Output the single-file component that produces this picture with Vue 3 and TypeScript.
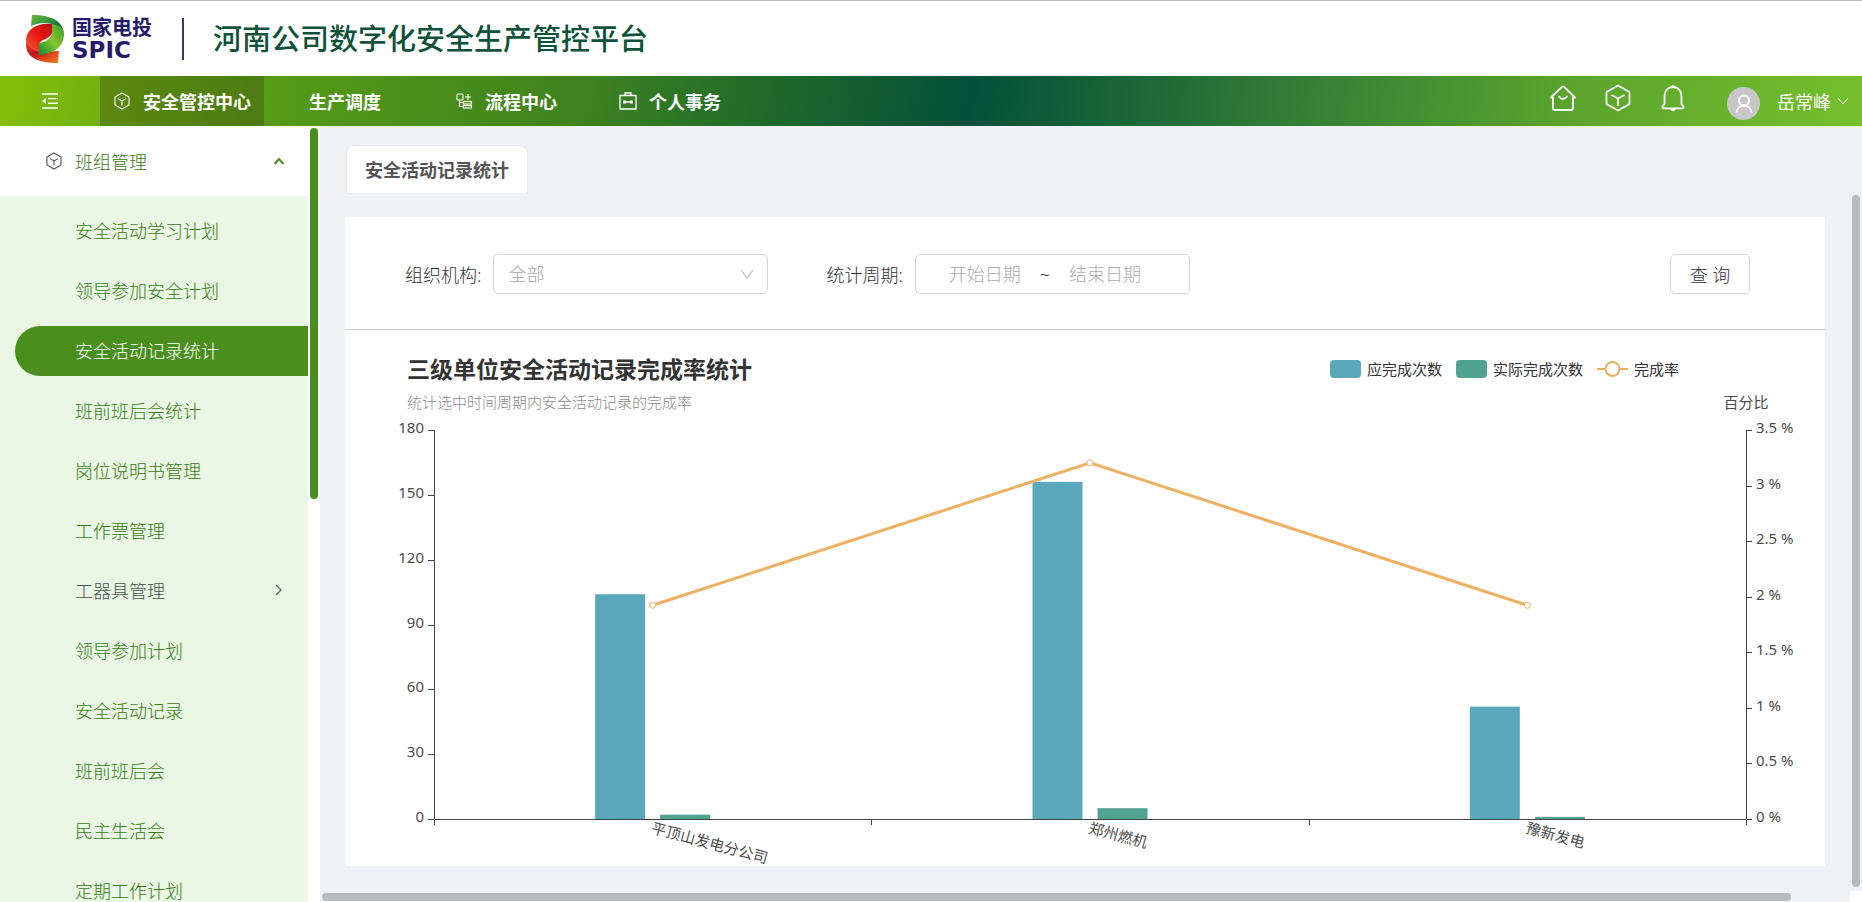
<script setup lang="ts">
import { computed, onBeforeUnmount, onMounted, ref } from 'vue'

interface MenuItem {
  label: string
  active?: boolean
  group?: boolean
}

const menu: MenuItem[] = [
  { label: '安全活动学习计划' },
  { label: '领导参加安全计划' },
  { label: '安全活动记录统计', active: true },
  { label: '班前班后会统计' },
  { label: '岗位说明书管理' },
  { label: '工作票管理' },
  { label: '工器具管理', group: true },
  { label: '领导参加计划' },
  { label: '安全活动记录' },
  { label: '班前班后会' },
  { label: '民主生活会' },
  { label: '定期工作计划' },
]

interface Unit {
  name: string
  planned: number
  done: number
}

const units: Unit[] = [
  { name: '平顶山发电分公司', planned: 104, done: 2 },
  { name: '郑州燃机', planned: 156, done: 5 },
  { name: '豫新发电', planned: 52, done: 1 },
]

const plot = ref<HTMLElement | null>(null)
const width = ref(1480)
const height = 450
const top = 14
const bottom = 403
const left = 89
const barWidth = 50
const barGap = 15
let observer: ResizeObserver | undefined

onMounted(() => {
  if (!plot.value) return
  width.value = plot.value.clientWidth
  observer = new ResizeObserver(() => {
    if (plot.value) width.value = plot.value.clientWidth
  })
  observer.observe(plot.value)
})
onBeforeUnmount(() => observer?.disconnect())

const right = computed(() => width.value - 79)
const band = computed(() => (right.value - left) / units.length)
const countY = (v: number): number => bottom - (v / 180) * (bottom - top)
const rateY = (v: number): number => bottom - (v / 3.5) * (bottom - top)
const countTicks = [0, 30, 60, 90, 120, 150, 180]
const rateTicks = [0, 0.5, 1, 1.5, 2, 2.5, 3, 3.5]
const groups = computed(() =>
  units.map((u, i) => ({
    ...u,
    x: left + band.value * (i + 0.5),
    rate: rateY((u.done / u.planned) * 100),
  })),
)
const linePoints = computed(() => groups.value.map((g) => `${g.x},${g.rate}`).join(' '))
const edges = computed(() => [0, 1, 2, 3].map((i) => Math.round(left + band.value * i)))
</script>

<template>
  <div class="app">
    <header class="brand">
      <svg class="logo" viewBox="0 0 40 48" aria-hidden="true">
        <defs>
          <linearGradient id="lgTop" x1="0" y1="0" x2="1" y2="1">
            <stop offset="0" stop-color="#6fb53c" />
            <stop offset="0.45" stop-color="#2b9340" />
            <stop offset="0.75" stop-color="#0a5a36" />
            <stop offset="1" stop-color="#1b8a3c" />
          </linearGradient>
          <linearGradient id="lgSide" x1="1" y1="0" x2="0" y2="1">
            <stop offset="0" stop-color="#3a9c35" />
            <stop offset="0.5" stop-color="#86c62c" />
            <stop offset="1" stop-color="#0e8a3b" />
          </linearGradient>
          <linearGradient id="lgRed" x1="1" y1="0" x2="0" y2="1">
            <stop offset="0" stop-color="#b80d16" />
            <stop offset="0.45" stop-color="#e8150f" />
            <stop offset="1" stop-color="#f0603a" />
          </linearGradient>
          <linearGradient id="lgBase" x1="0" y1="0" x2="1" y2="1">
            <stop offset="0" stop-color="#e8452c" />
            <stop offset="0.45" stop-color="#c5121c" />
            <stop offset="1" stop-color="#f5861c" />
          </linearGradient>
        </defs>
        <path d="M0 24C2 34 10 37 33 36L32 48C14 48 0 43 0 30Z" fill="url(#lgBase)" />
        <path d="M6 0C24 0 38 5 38 21L26 19V9C19 7 12 8 5 11Z" fill="url(#lgTop)" />
        <path d="M37 14C41 29 31 38 13 40V28C21 27 25 23 26 18L26 9C31 10 35 11 37 14Z" fill="url(#lgSide)" />
        <path d="M26 9V18C24 24 15 24 13 29V37C6 35 0 30 0 24C1 14 12 7 26 9Z" fill="url(#lgRed)" />
      </svg>
      <div class="wordmark">
        <span class="wordmark-cn">国家电投</span>
        <span class="wordmark-en">SPIC</span>
      </div>
      <span class="brand-rule"></span>
      <h1>河南公司数字化安全生产管控平台</h1>
    </header>

    <nav class="topnav">
      <button class="collapse" type="button" aria-label="收起菜单">
        <svg width="18" height="16" viewBox="0 0 18 16" fill="none" stroke="#fff" stroke-width="1.4">
          <path d="M1 1H17M7 5.6H17M7 10.2H17M1 15H17" />
          <path d="M5 5V11L1 8Z" fill="#fff" stroke="none" />
        </svg>
      </button>
      <a class="nav-item current" href="#">
        <svg width="18" height="18" viewBox="0 0 18 18" fill="none" stroke="#fff" stroke-width="1.1">
          <path d="M9 1L16 5V13L9 17L2 13V5ZM5 6.6L9 9L13 6.6M9 9V13.5" />
        </svg>
        安全管控中心
      </a>
      <a class="nav-item plain" href="#">生产调度</a>
      <a class="nav-item" href="#">
        <svg width="18" height="18" viewBox="0 0 18 18" fill="none" stroke="#fff" stroke-width="1.1">
          <rect x="2" y="2" width="6" height="6" rx="1" />
          <path d="M13 2V8M10 5H16M4.5 8V14.5H8M4.5 10.5H8" />
          <rect x="8.5" y="9.5" width="8" height="2.5" />
          <rect x="8.5" y="13.5" width="8" height="2.5" />
        </svg>
        流程中心
      </a>
      <a class="nav-item" href="#">
        <svg width="18" height="18" viewBox="0 0 18 18" fill="none" stroke="#fff" stroke-width="1.3">
          <path d="M1 3.5H17V17H1ZM6 3.5V1H12V3.5M4 10H14" />
          <path d="M4 8.5H7V11.5H4ZM11 8.5H14V11.5H11Z" fill="#fff" stroke="none" />
        </svg>
        个人事务
      </a>
      <div class="tools">
        <button type="button" aria-label="首页">
          <svg width="28" height="28" viewBox="0 0 28 28" fill="none" stroke="#fff" stroke-width="1.8" stroke-linejoin="round" stroke-linecap="round">
            <path d="M4 13.5H2L13 2.8Q14 2 15 2.8L26 13.5H24V24Q24 26 22 26H6Q4 26 4 24ZM10 12.5Q14 17.5 18 12.5" />
          </svg>
        </button>
        <button type="button" aria-label="应用">
          <svg width="28" height="28" viewBox="0 0 28 28" fill="none" stroke="#fff" stroke-width="1.7" stroke-linejoin="round">
            <path d="M14 1.5L25.5 8V20L14 26.5L2.5 20V8ZM7.5 11L14 14.5L20.5 11M14 14.5V22" />
          </svg>
        </button>
        <button type="button" aria-label="通知">
          <svg width="28" height="28" viewBox="0 0 28 28" fill="none" stroke="#fff" stroke-width="1.8" stroke-linejoin="round">
            <path d="M5.5 20V12.5C5.5 6.5 9 3 14 3S22.5 6.5 22.5 12.5V20L24.7 22.8Q24.7 24.3 23.5 24.3H4.5Q3.3 24.3 3.3 22.8ZM13 3Q14 1 15 3M11.5 24.3Q14 28.3 16.5 24.3" />
          </svg>
        </button>
        <svg class="avatar" width="33" height="33" viewBox="0 0 33 33" fill="none" stroke="#fff" stroke-width="2" aria-hidden="true">
          <circle cx="16.5" cy="16.5" r="16.5" fill="#c7c7c7" stroke="none" />
          <circle cx="17" cy="13.5" r="5" />
          <path d="M9.5 25.5C10 16.5 24 16.5 24.5 25.5" />
        </svg>
        <button class="user" type="button">
          岳常峰
          <svg width="12" height="8" viewBox="0 0 12 8" fill="none" stroke="#fff"><path d="M1 1L6 7L11 1" /></svg>
        </button>
      </div>
    </nav>

    <div class="body">
      <aside class="sidebar">
        <div class="menu">
          <button class="menu-head" type="button">
            <svg width="18" height="18" viewBox="0 0 18 18" fill="none" stroke="#555" stroke-width="1.1">
              <path d="M9 1L16 5V13L9 17L2 13V5ZM5 6.6L9 9L13 6.6M9 9V13.5" />
            </svg>
            <span>班组管理</span>
            <svg class="chev" width="12" height="8" viewBox="0 0 12 8" fill="none" stroke="#4b8f1e" stroke-width="2"><path d="M1.5 7L6 2L10.5 7" /></svg>
          </button>
          <ul>
            <li v-for="m in menu" :key="m.label">
              <a href="#" :class="{ active: m.active, group: m.group }">
                {{ m.label }}
                <svg v-if="m.group" class="chev" width="12" height="12" viewBox="0 0 12 12" fill="none" stroke="#666" stroke-width="1.4"><path d="M3 1L8 6L3 11" /></svg>
              </a>
            </li>
          </ul>
        </div>
        <div class="side-track"><span></span></div>
      </aside>

      <main>
        <div class="tabs"><a class="tab" href="#">安全活动记录统计</a></div>
        <div class="view">
          <div class="scroll-area">
            <section class="card">
              <form class="filters" @submit.prevent>
                <label for="org">组织机构:</label>
                <div class="select-wrap">
                  <select id="org"><option>全部</option></select>
                  <svg width="14" height="10" viewBox="0 0 14 10" fill="none" stroke="#bbb" stroke-width="1.2"><path d="M1 1L7 9L13 1" /></svg>
                </div>
                <label class="second" for="start">统计周期:</label>
                <div class="range">
                  <input id="start" type="text" placeholder="开始日期" />
                  <span>~</span>
                  <input type="text" placeholder="结束日期" aria-label="结束日期" />
                </div>
                <button class="query" type="submit">查 询</button>
              </form>

              <div class="chart-head">
                <div>
                  <h2>三级单位安全活动记录完成率统计</h2>
                  <p>统计选中时间周期内安全活动记录的完成率</p>
                </div>
                <ul class="legend">
                  <li><i class="planned"></i>应完成次数</li>
                  <li><i class="done"></i>实际完成次数</li>
                  <li>
                    <svg width="31" height="18" viewBox="0 0 31 18" fill="#fff" stroke="#f0b062" stroke-width="2"><path d="M0 9H31" /><circle cx="15.5" cy="9" r="7" /></svg>
                    完成率
                  </li>
                </ul>
              </div>

              <div ref="plot" class="plot">
                <svg class="chart" :width="width" :height="height" role="img" aria-label="三级单位安全活动记录完成率统计">
                  <g v-for="g in groups" :key="g.name">
                    <rect class="planned" :x="g.x - barWidth - barGap / 2" :y="countY(g.planned)" :width="barWidth" :height="bottom - countY(g.planned)" />
                    <rect class="done" :x="g.x + barGap / 2" :y="countY(g.done)" :width="barWidth" :height="bottom - countY(g.done)" />
                  </g>
                  <g class="axis">
                    <path :d="`M${left} ${top}V${bottom + 6}M${right} ${top}V${bottom + 6}M${left} ${bottom}H${right}`" />
                    <path v-for="e in edges" :key="e" :d="`M${e} ${bottom}v6`" />
                    <path v-for="t in countTicks" :key="t" :d="`M${left} ${Math.round(countY(t))}h-6`" />
                    <path v-for="t in rateTicks" :key="'r' + t" :d="`M${right} ${Math.round(rateY(t))}h6`" />
                  </g>
                  <g class="labels">
                    <text v-for="t in countTicks" :key="t" :x="left - 10" :y="Math.round(countY(t)) + 3" text-anchor="end">{{ t }}</text>
                    <text v-for="t in rateTicks" :key="'r' + t" :x="right + 10" :y="Math.round(rateY(t)) + 3">{{ t }} %</text>
                    <text v-for="g in groups" :key="g.name" :transform="`translate(${g.x} ${bottom + 5}) rotate(15)`" y="9">{{ g.name }}</text>
                    <text :x="right" y="-8" text-anchor="middle">百分比</text>
                  </g>
                  <polyline class="rate" :points="linePoints" />
                  <circle v-for="g in groups" :key="g.name" class="dot" :cx="g.x" :cy="g.rate" r="3" />
                </svg>
              </div>
            </section>
          </div>
          <div class="v-track"><span></span></div>
        </div>
        <div class="h-track"><div><span></span></div></div>
      </main>
    </div>
  </div>
</template>

<style>
body {
  overflow: hidden;
}
</style>

<style scoped>
.app {
  display: flex;
  flex-direction: column;
  height: 100vh;
  box-sizing: border-box;
  border-top: 1px solid #bdbdbd;
  background: #fff;
  font-family: 'Noto Sans', 'Noto Sans CJK SC', sans-serif;
  font-size: 18px;
  font-weight: 300;
  color: #333;
}
.app * {
  box-sizing: border-box;
}
svg {
  flex: none;
}
a {
  color: inherit;
  text-decoration: none;
}
button,
input,
select {
  font: inherit;
  color: inherit;
}
button {
  padding: 0;
  border: 0;
  background: none;
}
ul,
h1,
h2,
p {
  margin: 0;
  padding: 0;
  list-style: none;
}

.brand {
  flex: none;
  display: flex;
  align-items: center;
  height: 75px;
  padding: 0 26px;
}
.logo {
  width: 40px;
  height: 48px;
}
.wordmark {
  display: flex;
  flex-direction: column;
  margin-left: 6px;
  width: 110px;
  color: #251a6c;
  font-weight: 700;
}
.wordmark-cn {
  font-size: 20px;
  line-height: 22px;
}
.wordmark-en {
  font-family: 'DejaVu Sans', 'Noto Sans', sans-serif;
  font-size: 23px;
  line-height: 22px;
}
.brand-rule {
  width: 2px;
  height: 42px;
  background: #3a3080;
}
h1 {
  margin-left: 29px;
  font-size: 29px;
  line-height: 42px;
  font-weight: 500;
  color: #0d5239;
}

.topnav {
  flex: none;
  display: flex;
  height: 50px;
  color: #fff;
  background: linear-gradient(100deg, #84bf0a 0%, #569a17 15%, #3f831f 31%, #1d682b 42%, #04503a 52%, #2f7a36 68%, #5aa42e 84%, #75c02c 100%);
}
.collapse {
  width: 100px;
  display: flex;
  align-items: center;
  justify-content: center;
}
.nav-item {
  display: flex;
  align-items: center;
  gap: 12px;
  margin-right: 36px;
  padding: 0 13px;
  font-weight: 700;
}
.nav-item.current {
  margin-right: 32px;
  background: rgba(60, 80, 15, 0.42);
}
.nav-item.plain {
  margin-right: 48px;
}
.tools {
  display: flex;
  align-items: center;
  gap: 27px;
  margin-left: auto;
  padding: 0 13px 6px 0;
}
.tools button {
  display: flex;
}
.avatar {
  margin: 10px 0 0 13px;
}
.tools .user {
  align-items: center;
  gap: 6px;
  margin: 5px 0 0 -10px;
  font-weight: 400;
}

.body {
  flex: 1;
  min-height: 0;
  display: flex;
}
.sidebar {
  flex: none;
  display: flex;
  width: 320px;
}
.menu {
  flex: 1;
  overflow: hidden;
  background: #e9f7e4;
  color: #3a7a14;
}
.menu-head {
  display: flex;
  align-items: center;
  gap: 12px;
  width: 100%;
  height: 70px;
  padding: 0 23px 0 45px;
  background: #fff;
}
.chev {
  margin-left: auto;
}
.menu ul {
  display: flex;
  flex-direction: column;
  gap: 10px;
  padding: 10px 0 0 15px;
}
.menu li a {
  display: flex;
  align-items: center;
  height: 50px;
  padding: 0 23px 2px 60px;
  border-radius: 25px 0 0 25px;
}
.menu li .active {
  background: #4a8f1d;
  color: #fff;
}
.menu li .group {
  color: #4a504a;
}
.side-track {
  width: 12px;
  padding: 2px;
}
.side-track span {
  display: block;
  height: 48%;
  border-radius: 4px;
  background: #4a8f1d;
}

main {
  flex: 1;
  min-width: 0;
  display: flex;
  flex-direction: column;
  background: #eff1f5;
}
.tabs {
  flex: none;
  padding: 19px 26px 0;
  display: flex;
}
.tab {
  height: 48px;
  padding: 0 18px;
  border: 1px solid #e8e9ec;
  border-bottom: 0;
  border-radius: 8px 8px 0 0;
  background: #fff;
  line-height: 48px;
  font-weight: 700;
  color: #555;
}
.view {
  flex: 1;
  min-height: 0;
  display: flex;
}
.scroll-area {
  flex: 1;
  min-width: 0;
  overflow: hidden;
  padding: 24px 25px 0;
}
.card {
  background: #fff;
}
.filters {
  display: flex;
  align-items: center;
  height: 113px;
  padding: 2px 75px 0 60px;
  border-bottom: 1px solid #ccc;
}
.select-wrap {
  position: relative;
  width: 275px;
  margin-left: 12px;
}
.select-wrap svg {
  position: absolute;
  top: 15px;
  right: 14px;
}
select {
  appearance: none;
  width: 100%;
  height: 40px;
  padding: 0 14px;
  border: 1px solid #d6d6d6;
  border-radius: 5px;
  background: #fff;
  color: #a4a4a4;
}
.second {
  margin-left: 58px;
}
.range {
  display: flex;
  align-items: center;
  width: 275px;
  height: 40px;
  margin-left: 12px;
  padding: 0 14px;
  border: 1px solid #d6d6d6;
  border-radius: 5px;
}
.range input {
  width: 110px;
  min-width: 0;
  padding: 0;
  border: 0;
  background: none;
  text-align: center;
}
.range input::placeholder {
  color: #acacac;
  opacity: 1;
}
.query {
  width: 80px;
  height: 40px;
  margin-left: auto;
  border: 1px solid #d6d6d6;
  border-radius: 5px;
}

.chart-head {
  display: flex;
  justify-content: space-between;
  align-items: flex-start;
  padding: 23px 146px 0 62px;
}
h2 {
  font-size: 23px;
  line-height: 32px;
  font-weight: 700;
  color: #333;
}
.chart-head p {
  padding-top: 4px;
  font-size: 15px;
  line-height: 26px;
  color: #8c8c8c;
}
.plot {
  padding-top: 1px;
}
.legend {
  display: flex;
  gap: 14px;
  font-size: 15px;
  line-height: 32px;
  font-weight: 400;
  color: #333;
}
.legend li {
  display: flex;
  align-items: center;
  gap: 6px;
}
.legend i {
  width: 31px;
  height: 18px;
  border-radius: 4px;
}
i.planned {
  background: #5ba8bd;
}
i.done {
  background: #50a38f;
}
.chart {
  display: block;
  overflow: visible;
}
rect.planned {
  fill: #5ba8bd;
}
rect.done {
  fill: #50a38f;
}
.axis path {
  fill: none;
  stroke: #444;
  shape-rendering: crispEdges;
}
.labels text {
  font-size: 15px;
  font-weight: 400;
  fill: #4d4d4d;
}
.rate {
  fill: none;
  stroke: #f0b062;
  stroke-width: 3px;
}
.dot {
  fill: #fff;
  stroke: #f0b062;
  stroke-width: 1px;
}

.v-track {
  flex: none;
  width: 12px;
  padding: 2px 2px 4px;
}
.v-track span {
  display: block;
  height: 100%;
  border-radius: 4px;
  background: #b9babe;
}
.h-track {
  flex: none;
  display: flex;
  background: #fff;
}
.h-track div {
  flex: 1;
  margin-right: 12px;
  padding: 2px 59px 1px 2px;
  background: #eff1f5;
}
.h-track span {
  display: block;
  height: 8px;
  border-radius: 4px;
  background: #b9babe;
}
</style>
